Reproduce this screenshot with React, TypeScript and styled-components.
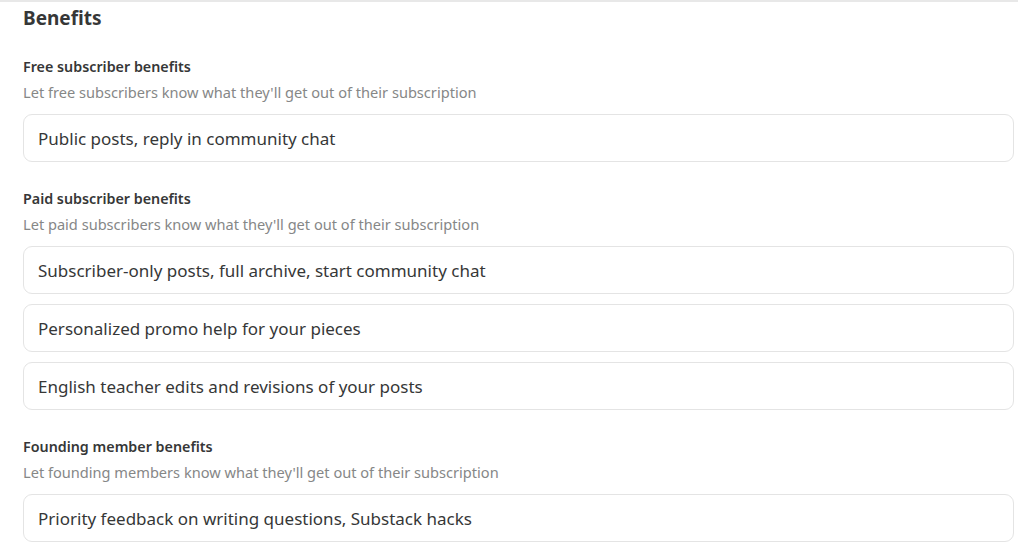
import React from 'react';
import styled, { createGlobalStyle } from 'styled-components';

const GlobalStyle = createGlobalStyle`
  body {
    margin: 0;
    background: #ffffff;
    font-family: "Noto Sans", "Open Sans", sans-serif;
    color: #363737;
  }
`;

const Section = styled.section`
  width: 1018px;
  border-top: 2px solid #e8e8e8;
  margin-top: 0;
  padding: 3px 4px 12px 23px;
  box-sizing: border-box;
`;

const Title = styled.h2`
  margin: 0;
  font-size: 19px;
  line-height: 26px;
  font-weight: 700;
  color: #363737;
`;

const Group = styled.div<{ $first?: boolean }>`
  margin-top: ${(p) => (p.$first ? '26px' : '27px')};
`;

const Label = styled.div`
  font-size: 14.3px;
  line-height: 20px;
  font-weight: 600;
  color: #363737;
`;

const Hint = styled.div`
  margin-top: 5px;
  font-size: 14.6px;
  line-height: 20px;
  color: #868787;
`;

const Fields = styled.div`
  display: flex;
  flex-direction: column;
  gap: 10px;
  margin-top: 12px;
`;

const Field = styled.input`
  display: block;
  width: 100%;
  height: 48px;
  box-sizing: border-box;
  border: 1px solid #e4e4e4;
  border-radius: 9px;
  padding: 0 14px;
  font-family: inherit;
  font-size: 17px;
  color: #363737;
  background: #fff;
  outline: none;
`;

const groups = [
  {
    label: 'Free subscriber benefits',
    hint: "Let free subscribers know what they'll get out of their subscription",
    values: ['Public posts, reply in community chat'],
  },
  {
    label: 'Paid subscriber benefits',
    hint: "Let paid subscribers know what they'll get out of their subscription",
    values: [
      'Subscriber-only posts, full archive, start community chat',
      'Personalized promo help for your pieces',
      'English teacher edits and revisions of your posts',
    ],
  },
  {
    label: 'Founding member benefits',
    hint: "Let founding members know what they'll get out of their subscription",
    values: ['Priority feedback on writing questions, Substack hacks'],
  },
];

export default function App() {
  return (
    <>
      <GlobalStyle />
      <Section>
        <Title>Benefits</Title>
        {groups.map((g, i) => (
          <Group key={g.label} $first={i === 0}>
            <Label>{g.label}</Label>
            <Hint>{g.hint}</Hint>
            <Fields>
              {g.values.map((v) => (
                <Field key={v} type="text" defaultValue={v} />
              ))}
            </Fields>
          </Group>
        ))}
      </Section>
    </>
  );
}
